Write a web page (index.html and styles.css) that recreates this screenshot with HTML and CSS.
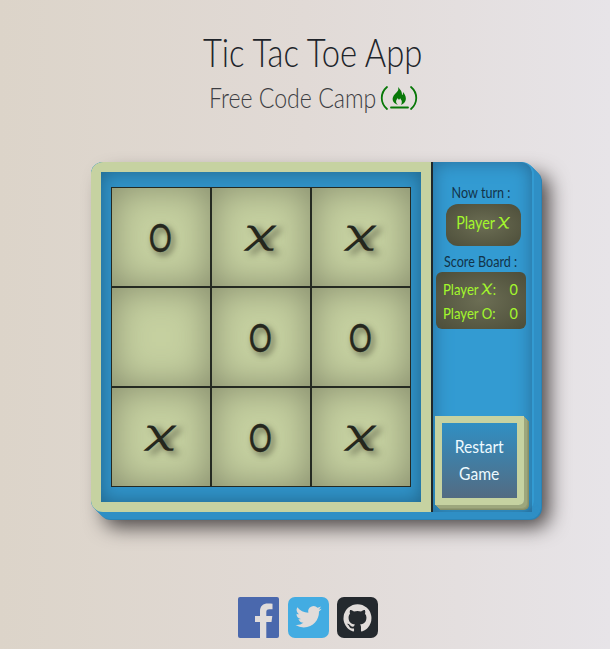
FILE: index.html
```html
<!DOCTYPE html>
<html lang="en">
<head>
<meta charset="utf-8">
<title>Tic Tac Toe App</title>
<link rel="stylesheet" href="styles.css">
</head>
<body>
<header>
  <h1><span>Tic Tac Toe App</span></h1>
  <h2><span class="camp">Free Code Camp</span>
    <svg class="fcc" viewBox="0 0 38 26" width="38" height="26"><g fill="none" stroke="#087808" stroke-width="1.8" stroke-linecap="round"><path d="M7 2C0 8 0 18 7 24M31 2c7 6 7 16 0 22M11 22.5h17"/></g><path fill="#087808" d="M18 2c4 4 4 6 4 8 1 0 1-2 1-3 5 6 3 11-2 13 2-4 0-5-1-7 0 2-2 2-2 0-3 3-2 5 0 7-6-2-7-7-3-11 3-3 4-4 3-7z"/></svg>
  </h2>
</header>
<main class="game">
  <section class="board">
    <div class="cells">
      <div class="cell"><span class="o">O</span></div><div class="cell"><span class="x">χ</span></div><div class="cell"><span class="x">χ</span></div>
      <div class="cell"></div><div class="cell"><span class="o">O</span></div><div class="cell"><span class="o">O</span></div>
      <div class="cell"><span class="x">χ</span></div><div class="cell"><span class="o">O</span></div><div class="cell"><span class="x">χ</span></div>
    </div>
  </section>
  <aside class="panel">
    <p class="label now"><span>Now turn :</span></p>
    <div class="turn"><span>Player <i>χ</i></span></div>
    <p class="label"><span>Score Board :</span></p>
    <div class="scores">
      <div class="row"><span class="name">Player <i>χ</i>:</span><span class="num">0</span></div>
      <div class="row"><span class="name">Player O:</span><span class="num">0</span></div>
    </div>
    <button class="restart"><span>Restart<br>Game</span></button>
  </aside>
</main>
<footer>
  <svg viewBox="0 0 41 41" width="41" height="41"><rect width="41" height="41" rx="2" fill="#4a68ad"/><path fill="#e1dcda" d="M22 41V25h-5v-6h5v-4.500C22 9 25 6.500 30 6.500c2 0 3.500.1 4.500.2v5.500h-3c-2.600 0-3.200 1.200-3.200 3.100V19h6l-.8 6h-5.200v16z"/></svg>
  <svg viewBox="0 0 41 41" width="41" height="41"><rect width="41" height="41" rx="7" fill="#43ace2"/><path fill="#e1dcda" transform="translate(7.500 6.700) scale(1.090)" d="M23.950 4.570a10 10 0 0 1-2.820.770 4.960 4.960 0 0 0 2.160-2.720c-.950.550-2 .950-3.130 1.180a4.920 4.920 0 0 0-8.380 4.480C7.690 8.100 4.070 6.130 1.640 3.160a4.920 4.920 0 0 0 1.520 6.570 4.900 4.900 0 0 1-2.230-.610v.060a4.920 4.920 0 0 0 3.950 4.830 5 5 0 0 1-2.210.080 4.940 4.940 0 0 0 4.600 3.420A9.870 9.870 0 0 1 0 19.540a13.990 13.990 0 0 0 7.550 2.210c9.050 0 14-7.500 14-13.980 0-.210 0-.420-.020-.630a9.940 9.940 0 0 0 2.420-2.570z"/></svg>
  <svg viewBox="0 0 41 41" width="41" height="41"><rect width="41" height="41" rx="7" fill="#24292e"/><path fill="#e1dcda" transform="translate(6.500 6.800) scale(1.170)" d="M12 .3a12 12 0 0 0-3.800 23.380c.6.120.830-.260.830-.570L9 21.070c-3.340.720-4.040-1.610-4.040-1.610-.550-1.390-1.340-1.760-1.340-1.760-1.080-.740.090-.730.090-.730 1.200.090 1.840 1.240 1.840 1.240 1.070 1.830 2.810 1.300 3.490 1 .1-.780.420-1.310.760-1.610-2.670-.3-5.470-1.330-5.470-5.930 0-1.310.470-2.380 1.240-3.220-.140-.3-.540-1.520.1-3.180 0 0 1-.320 3.300 1.230a11.500 11.500 0 0 1 6 0c2.280-1.550 3.290-1.230 3.290-1.230.640 1.660.240 2.880.120 3.180a4.650 4.650 0 0 1 1.230 3.220c0 4.610-2.800 5.630-5.480 5.920.420.360.810 1.100.810 2.220l-.010 3.290c0 .310.2.690.820.570A12 12 0 0 0 12 .3"/></svg>
</footer>
</body>
</html>
```
FILE: styles.css
```css
* { box-sizing: border-box; }
body { margin: 0; height: 649px; overflow: hidden; font-family: Lato, "Liberation Sans", sans-serif; color: #20242a; background: linear-gradient(to right, #dcd4c9, #e1dad6 50%, #e7e4e8); }
h1, h2, p { margin: 0; font-weight: 300; }
span { display: inline-block; white-space: nowrap; }
i { font-style: normal; display: inline-block; font-family: "Noto Sans", sans-serif; line-height: 1; transform: translateY(-3px) scale(1.4, .88) skewX(-5deg); margin: 0 2px; }
header { height: 162px; padding-top: 28px; }
h1 { height: 48px; display: flex; justify-content: center; padding-left: 16px; font-size: 39px; line-height: 48px; }
h1 span { transform: scaleX(.84); }
h2 { display: flex; align-items: center; height: 44px; padding-left: 209px; font-size: 27px; line-height: 44px; color: #3c3d42; }
.camp { width: 171px; transform: scaleX(.855); transform-origin: left; }
.fcc { flex: none; }
.game { display: flex; width: 443px; height: 350px; margin-left: 91px; border-radius: 12px; background: #339bd2;
  box-shadow: 1px 1px #2f8fc5, 2px 2px #2f8fc5, 3px 3px #2f8fc5, 4px 4px #2f8fc5, 5px 5px #2f8fc5, 6px 6px #2f8fc5, 7px 7px #2f8fc5, 8px 8px #2a83b5, 14px 14px 20px 1px #4a4545; }
.board { position: relative; width: 342px; padding: 15px 10px; border: 10px solid #c6d2a1; border-right-width: 12px; background: #3092c7; box-shadow: inset 0 0 18px #21658a; clip-path: inset(0 round 12px 0 0 12px); }
.board::after { content: ""; position: absolute; right: -12px; top: -10px; bottom: -10px; width: 2px; background: #20282a; }
.cells { display: grid; grid-template-columns: repeat(3, 100px); grid-template-rows: repeat(3, 100px); width: 300px; }
.cell { display: flex; align-items: center; justify-content: center; border: 1px solid #252a22; background: #c5d0a0; box-shadow: inset 0 0 36px #858b6b; font-size: 38px; color: #25271d; text-shadow: 4px 3px 7px #4d503b; }
.o { transform: translate(-1px, 0) scaleX(.76); -webkit-text-stroke: .3px #25271d; }
.x { font-family: "Noto Sans", sans-serif; font-size: 37px; transform: translateY(-7px) scale(1.42, .88) skewX(-5deg); }
.panel { width: 99px; height: 350px; display: flex; flex-direction: column; align-items: center; padding: 21px 3px 0 0; border-radius: 0 12px 0 0; box-shadow: inset 0 0 18px #276b96; }
.label { height: 20px; font-size: 15px; line-height: 18px; font-weight: 400; color: #123349; }
.label span { transform: scaleX(.84); }
.now { height: 21px; }
.turn { width: 75px; height: 42px; margin: 0 0 6px 4px; padding-bottom: 5px; border-radius: 12px; display: flex; align-items: center; justify-content: center; }
.turn, .scores { background: radial-gradient(#6c6e54, #4c4d39); color: #a3f72c; font-size: 17px; }
.turn span { transform: scaleX(.84); }
.scores { width: 90px; height: 57px; border-radius: 6px; padding: 5px 8px 3px 7px; font-size: 16px; }
.row { display: flex; justify-content: space-between; height: 24px; line-height: 24px; }
.name { width: 60px; transform: scaleX(.82); transform-origin: left; }
.num { transform: scaleX(.9); }
.restart { width: 89px; height: 89px; margin: 87px 3px 0 0; padding: 0; border: 7px solid #c6d2a1; background: linear-gradient(#308fc3, #536b82); background-clip: padding-box; color: #edfaff; font: 18px/27px Lato, sans-serif; border-radius: 0 0 5px 0; box-shadow: 1px 1px #9da77d, 2px 2px #9da77d, 3px 3px #9da77d, 4px 4px #929a72, 5px 5px #858e68; }
.restart span { transform: translateY(-1px) scaleX(.87); }
footer { display: flex; gap: 8.500px; padding: 85px 0 0 238px; }
```
